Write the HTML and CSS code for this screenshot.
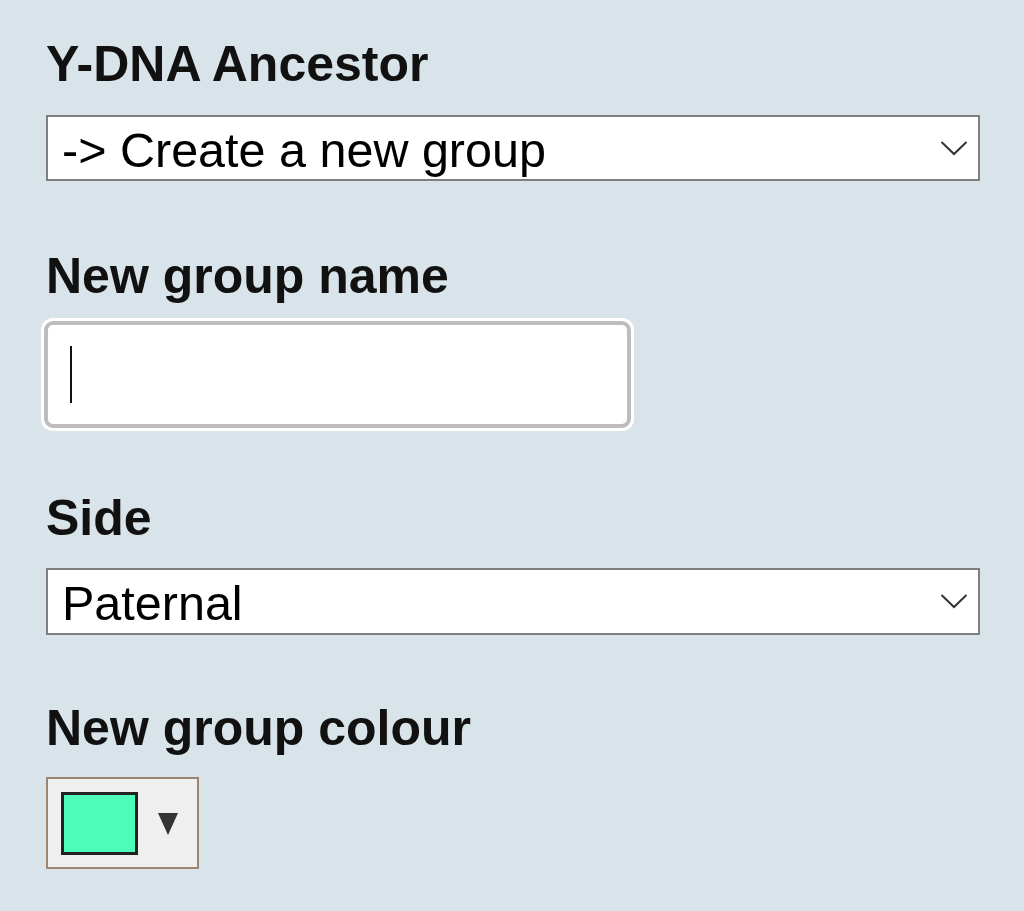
FILE: index.html
```html
<!DOCTYPE html>
<html lang='en'>
<head>
    <meta charset='UTF-8'>
    <meta name='viewport' content='width=device-width, initial-scale=1.0'>
    <title>New Group</title>
    <link rel="stylesheet" href="styles.css">
</head>
<body>
    <div id='content'>
        <form>
            <label class='lbl first' for='ancestor'>Y-DNA Ancestor</label>
            <div class='selectWrap'>
                <select id='ancestor' name='ancestor'>
                    <option value='new'>-&gt; Create a new group</option>
                </select>
                <svg class='chev' width='28' height='16' viewBox='0 0 28 16'>
                    <polyline points='1.5,2 14,14 26.5,2' fill='none' stroke='#333' stroke-width='2'/>
                </svg>
            </div>

            <label class='lbl name' for='groupName'>New group name</label>
            <div class='inputWrap'>
                <input type='text' id='groupName' name='groupName' value=''>
                <span class='caret'></span>
            </div>

            <label class='lbl side' for='side'>Side</label>
            <div class='selectWrap'>
                <select id='side' name='side'>
                    <option value='P'>Paternal</option>
                    <option value='M'>Maternal</option>
                </select>
                <svg class='chev' width='28' height='16' viewBox='0 0 28 16'>
                    <polyline points='1.5,2 14,14 26.5,2' fill='none' stroke='#333' stroke-width='2'/>
                </svg>
            </div>

            <label class='lbl colour'>New group colour</label>
            <button type='button' class='colourBtn'>
                <span class='swatch'></span>
                <svg class='tri' width='20' height='22' viewBox='0 0 20 22'>
                    <polygon points='0,0 20,0 10,22' fill='#333'/>
                </svg>
            </button>
        </form>
    </div>
</body>
</html>
```

FILE: styles.css
```css
html, body {
    margin: 0; padding: 0;
    background: #d8e3ea;
    font-family: "Liberation Sans", Helvetica, Arial, sans-serif;
    height: 100%;
}
#content { padding: 36px 44px 0 46px; }
form { display: flex; flex-direction: column; align-items: flex-start; }

.lbl {
    display: block;
    font-size: 50px; font-weight: bold;
    line-height: 56px; color: #111;
    margin-bottom: 23px;
}
.name { margin-top: 67px; margin-bottom: 17px; }
.side { margin-top: 62px; margin-bottom: 22px; }
.colour { margin-top: 65px; margin-bottom: 21px; }

.selectWrap { position: relative; width: 934px; }
select {
    -webkit-appearance: none; appearance: none;
    display: block;
    width: 100%; height: 66px;
    margin: 0;
    border: 2px solid #7f7f7f; border-radius: 0;
    background: white;
    font-family: inherit; font-size: 48.5px; color: #000;
    padding: 3px 60px 0 14px;
    outline: none;
}
#side { height: 67px; }
.chev {
    position: absolute;
    right: 12px; top: 25px;
    pointer-events: none;
}

.inputWrap { position: relative; margin-left: -2px; }
input[type='text'] {
    display: block;
    box-sizing: border-box;
    width: 587px; height: 107px;
    margin: 0;
    border: 4px solid #bdbdbd; border-radius: 9px;
    box-shadow: 0 0 0 3px white;
    background: white;
    font-family: inherit; font-size: 56px;
    padding: 0 24px;
    outline: none;
}
.caret {
    position: absolute;
    left: 26px; top: 25px;
    width: 2px; height: 57px;
    background: #111;
}

.colourBtn {
    display: flex; align-items: center;
    box-sizing: border-box;
    width: 153px; height: 92px;
    margin: 0; padding: 0 0 0 13px;
    border: 2px solid #9c8571; border-radius: 0;
    background: #efefef;
    cursor: pointer;
}
.swatch {
    display: block;
    box-sizing: border-box;
    width: 77px; height: 63px;
    border: 3px solid #222;
    background: #4cfcb8;
}
.tri { margin-left: 20px; margin-top: 2px; }
```
